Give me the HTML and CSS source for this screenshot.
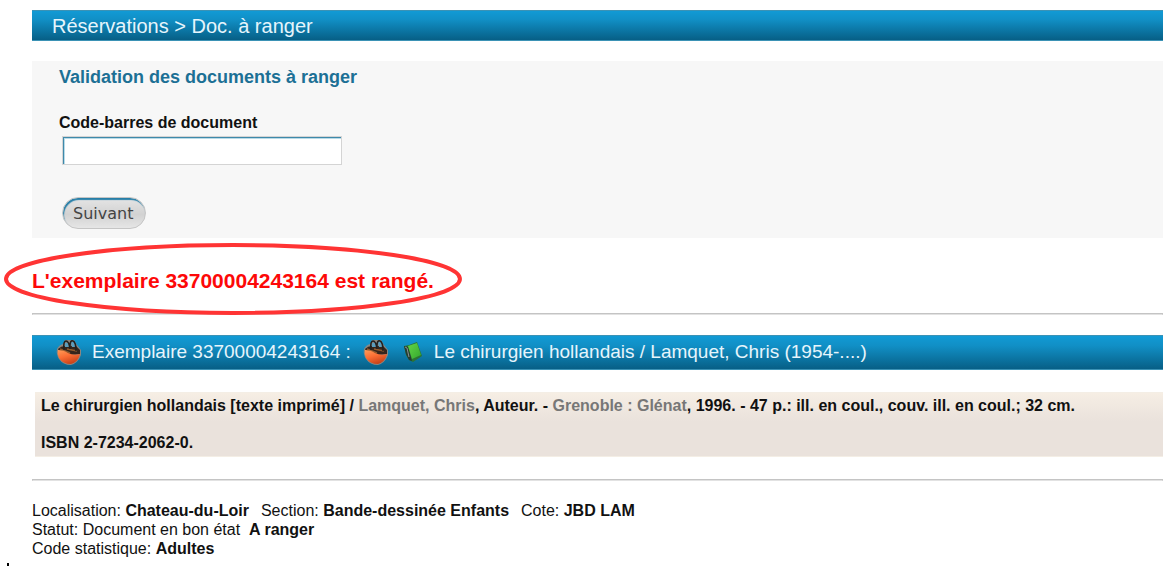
FILE: index.html
```html
<!DOCTYPE html>
<html lang="fr">
<head>
<meta charset="utf-8">
<title>Réservations - Doc. à ranger</title>
<link rel="stylesheet" href="styles.css">
</head>
<body>
<svg class="defs" aria-hidden="true">
  <defs>
    <linearGradient id="bowl" x1="0" y1="0" x2="0.5" y2="1"><stop offset="0" stop-color="#ff9c58"/><stop offset=".5" stop-color="#fb6e34"/><stop offset="1" stop-color="#c8431a"/></linearGradient>
    <linearGradient id="cover" x1="0" y1="0" x2="1" y2="1"><stop offset="0" stop-color="#62d548"/><stop offset="1" stop-color="#35a82c"/></linearGradient>
    <symbol id="basket" viewBox="0 0 26 28">
      <path d="M1 11 Q3 7 7 6 L9 2 L18 2 L21 7 L25 12 L25 17 Q22 25 15 27 Q7 27 3 21 Q0 16 1 11Z" fill="#8b8680"/>
      <path d="M2 11 Q5 8 9 8 L20 8 L24 12 L24 16 L14 17 L3 13Z" fill="#35251c"/>
      <path d="M4 11 L14 15 M11 11 L21 13" stroke="#90592c" stroke-width="1.5"/>
      <path d="M2 12 Q8 12 12 15 Q18 18 24 16 Q22 24 15 26 Q7 26 3 20 Q1 16 2 12Z" fill="url(#bowl)"/>
      <path d="M9 5 L12 5 L13 9 L9 9Z M15 4 L18 4 L19 9 L16 9Z" fill="#5b9dbd"/>
      <path d="M8 12 Q7 3 10 3 Q13 3 14 11 M14 8 Q14 2 17 3 Q20 4 20 13" fill="none" stroke="#20201f" stroke-width="1.5"/>
    </symbol>
    <symbol id="book" viewBox="0 0 18 20">
      <path d="M0 4 L5 3 L13 0 L18 14 L9 20 L5 18 L2 13Z" fill="#2b7434"/>
      <path d="M0 4 L4 5 L8 19 L5 18 L2 12Z" fill="#263b32"/>
      <path d="M1 5 L3 6 L5 15" fill="none" stroke="#8a9590" stroke-width="1"/>
      <path d="M4 4 L13 1 L17 13 L8 17Z" fill="url(#cover)"/>
    </symbol>
  </defs>
</svg>
<main class="page">
  <h1 class="bar bar-top">Réservations &gt; Doc. à ranger</h1>
  <form class="panel">
    <h2 class="panel-title">Validation des documents à ranger</h2>
    <label class="label" for="barcode">Code-barres de document</label>
    <input class="field" id="barcode" type="text">
    <button class="button" type="button">Suivant</button>
  </form>
  <p class="message">L'exemplaire 33700004243164 est rangé.
    <svg class="ring" viewBox="0 0 458 74" preserveAspectRatio="none" aria-hidden="true"><ellipse cx="229" cy="37" rx="227" ry="34"/></svg>
  </p>
  <hr class="rule">
  <h2 class="bar bar-item">
    <svg class="basket" aria-hidden="true"><use href="#basket"/></svg>
    <span>Exemplaire 33700004243164 :</span>
    <svg class="basket" aria-hidden="true"><use href="#basket"/></svg>
    <svg class="book" aria-hidden="true"><use href="#book"/></svg>
    <span>Le chirurgien hollandais / Lamquet, Chris (1954-....)</span>
  </h2>
  <section class="notice">
    <p>Le chirurgien hollandais [texte imprimé] / <a href="#">Lamquet, Chris</a>, Auteur. - <a href="#">Grenoble : Glénat</a>, 1996. - 47 p.: ill. en coul., couv. ill. en coul.; 32 cm.</p>
    <p>ISBN 2-7234-2062-0.</p>
  </section>
  <hr class="rule">
  <div class="details">
    <div class="line"><span>Localisation: <b>Chateau-du-Loir</b></span><span>Section: <b>Bande-dessinée Enfants</b></span><span>Cote: <b>JBD LAM</b></span></div>
    <div>Statut: Document en bon état &nbsp;<b>A ranger</b></div>
    <div>Code statistique: <b>Adultes</b></div>
  </div>
</main>
<div class="caret"></div>
</body>
</html>
```
FILE: styles.css
```css
* { box-sizing: border-box; }
body {
  margin: 0;
  background: #fff;
  color: #111;
  font: 16px/19px "Liberation Sans", Arial, sans-serif;
}
h1, h2, p { margin: 0; }
.defs { position: absolute; width: 0; height: 0; }
.page { padding: 10px 8px 0 32px; }
.bar {
  display: flex;
  align-items: center;
  color: #e6f5fc;
  font-weight: 400;
  line-height: 24px;
  background: linear-gradient(#119ad5, #118fc5 30%, #075f86);
  border: 1px solid #3b92b5;
  border-width: 1px 0;
}
.bar-top { min-height: 31px; padding: 2px 20px; font-size: 20px; }
.bar-item { min-height: 35px; padding: 0 24px 2px; font-size: 19px; }
.panel {
  display: flex;
  flex-direction: column;
  align-items: flex-start;
  margin-top: 20px;
  padding: 5px 27px 9px;
  background: #f7f7f7;
}
.panel-title { color: #1c7095; font-size: 18px; line-height: 22px; }
.label { margin-top: 25px; font-size: 16px; font-weight: 700; line-height: 20px; }
.field {
  width: 280px;
  max-width: 100%;
  height: 29px;
  margin: 3px 0 0 3px;
  padding: 2px 6px;
  font: 16px "Liberation Sans", Arial, sans-serif;
  background: #fff;
  border: 1px solid #d4d4d4;
  box-shadow: inset 1px 1px #3f89aa, inset 2px 2px #b9dbe8;
}
.button {
  height: 32px;
  margin: 32px 0 0 3px;
  padding: 0 12px 0 10px;
  color: #444;
  font: 16px "DejaVu Sans", sans-serif;
  background: linear-gradient(#e5e5e5, #d2d2d2 55%, #e6e6e6);
  border: 1px solid #c5c5c5;
  border-radius: 16px;
  box-shadow: inset 1px 2px 1px #277fa8;
}
.message {
  position: relative;
  width: fit-content;
  margin-top: 30px;
  color: #fd0808;
  font-size: 21px;
  font-weight: 700;
  line-height: 26px;
}
.ring {
  position: absolute;
  top: -26px;
  left: -28px;
  width: calc(100% + 56px);
  height: 74px;
  overflow: visible;
}
.ring ellipse { fill: none; stroke: #ff3434; stroke-width: 4; }
.rule {
  margin: 19px 0 20px;
  border: 1px solid #c4c4c4;
  border-bottom-color: #e2e2e2;
}
.basket { width: 26px; height: 28px; margin-right: 10px; }
.bar-item span + .basket { margin-left: 12px; margin-right: 15px; }
.book { width: 18px; height: 20px; margin-right: 12px; }
.notice {
  margin: 22px 0 22px 3px;
  padding: 3px 6px 4px;
  font-weight: 700;
  background: linear-gradient(#f6eee4, #eae2dc 45%, #eae2dc);
  border: 1px solid #f4eee5;
  border-width: 1px 0;
}
.notice p + p { margin-top: 18px; }
.notice a { color: #777; text-decoration: none; }
.line { display: flex; flex-wrap: wrap; gap: 0 12px; }
.caret { width: 2px; height: 3px; margin: 5px 0 0 7px; background: #000; }
```
